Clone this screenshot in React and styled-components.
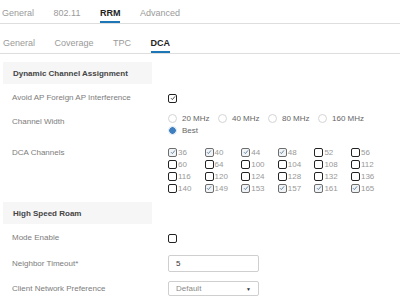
import React from 'react'
import styled, { createGlobalStyle } from 'styled-components'

const GlobalStyle = createGlobalStyle`
  body {
    margin: 0;
    background: #ffffff;
    font-family: "Liberation Sans", Arial, sans-serif;
  }
`

const channels = [
  [36, true], [40, true], [44, true], [48, true], [52, false], [56, false],
  [60, false], [64, false], [100, false], [104, false], [108, false], [112, false],
  [116, false], [120, false], [124, false], [128, false], [132, false], [136, false],
  [140, false], [149, true], [153, true], [157, true], [161, true], [165, true],
]

const widths = ['20 MHz', '40 MHz', '80 MHz', '160 MHz']

function Check({ checked, soft }) {
  return (
    <Box checked={checked} soft={soft}>
      {checked && (
        <svg width="6" height="6" viewBox="0 0 6 6">
          <path d="M1 3.2 L2.4 4.6 L5 1.4" fill="none" stroke={soft ? '#5b7c9a' : '#333'} strokeWidth="0.9" />
        </svg>
      )}
    </Box>
  )
}

export default function App() {
  return (
    <Page>
      <GlobalStyle />
      <TabBar top>
        <Tab>General</Tab>
        <Tab>802.11</Tab>
        <Tab active>RRM</Tab>
        <Tab>Advanced</Tab>
      </TabBar>
      <TabBar>
        <Tab>General</Tab>
        <Tab>Coverage</Tab>
        <Tab>TPC</Tab>
        <Tab active>DCA</Tab>
      </TabBar>

      <SectionHead>Dynamic Channel Assignment</SectionHead>

      <Row top={8}>
        <Label>Avoid AP Foreign AP Interference</Label>
        <Control><Check checked /></Control>
      </Row>

      <Row top={8}>
        <Label pad={4}>Channel Width</Label>
        <RadioGrid>
          {widths.map((w) => (
            <Option key={w}><Radio />{w}</Option>
          ))}
          <Option><Radio selected />Best</Option>
        </RadioGrid>
      </Row>

      <Row top={10}>
        <Label pad={1}>DCA Channels</Label>
        <ChannelGrid>
          {channels.map(([n, on]) => (
            <Channel key={n}><Check checked={on} soft />{n}</Channel>
          ))}
        </ChannelGrid>
      </Row>

      <SectionHead top={8}>High Speed Roam</SectionHead>

      <Row top={8}>
        <Label>Mode Enable</Label>
        <Control><Check /></Control>
      </Row>

      <Row top={11} center>
        <Label>Neighbor Timeout*</Label>
        <Input>5</Input>
      </Row>

      <Row top={9} center>
        <Label>Client Network Preference</Label>
        <Select>
          <span>Default</span>
          <Caret>▼</Caret>
        </Select>
      </Row>
    </Page>
  )
}

const Page = styled.div`
  width: 400px;
  height: 299px;
  overflow: hidden;
  background: #fff;
`

const TabBar = styled.div`
  display: flex;
  gap: 19.5px;
  height: ${(p) => (p.top ? '23px' : '29px')};
  padding-left: ${(p) => (p.top ? '2px' : '3px')};
  border-bottom: 1px solid #dedede;
  align-items: flex-end;
`

const Tab = styled.div`
  font-size: 9px;
  line-height: 11px;
  color: ${(p) => (p.active ? '#222' : '#9a9a9a')};
  font-weight: ${(p) => (p.active ? 600 : 400)};
  padding-bottom: 2px;
  border-bottom: 2px solid ${(p) => (p.active ? '#1d76b5' : 'transparent')};
`

const SectionHead = styled.div`
  margin: ${(p) => p.top || 8}px 0 0 3px;
  width: 139px;
  height: 22px;
  padding-left: 10px;
  background: #f6f6f6;
  display: flex;
  align-items: center;
  font-size: 8px;
  font-weight: 700;
  color: #444;
`

const Row = styled.div`
  display: flex;
  align-items: ${(p) => (p.center ? 'center' : 'flex-start')};
  margin-top: ${(p) => p.top}px;
  padding-left: 12px;
`

const Label = styled.div`
  width: 156px;
  flex: none;
  font-size: 8px;
  line-height: 12px;
  padding-top: ${(p) => p.pad || 0}px;
  color: #7c7c7c;
`

const Control = styled.div`
  height: 12px;
  display: flex;
  align-items: center;
`

const Box = styled.span`
  box-sizing: border-box;
  width: 9px;
  height: 9px;
  flex: none;
  border-radius: 2px;
  border: ${(p) => (p.soft && p.checked ? '1.2px solid #6d6d6d' : '1.5px solid #222')};
  background: ${(p) => (p.soft && p.checked ? '#f1f4f7' : '#fff')};
  display: inline-flex;
  align-items: center;
  justify-content: center;
`

const RadioGrid = styled.div`
  display: grid;
  grid-template-columns: repeat(4, 50px);
  grid-auto-rows: 12px;
`

const Option = styled.label`
  display: flex;
  align-items: center;
  gap: 5px;
  font-size: 8px;
  color: #666;
  white-space: nowrap;
`

const Radio = styled.span`
  box-sizing: border-box;
  width: 9px;
  height: 9px;
  border-radius: 50%;
  flex: none;
  border: 1px solid ${(p) => (p.selected ? '#d7e4f0' : '#d4d4d4')};
  background: ${(p) => (p.selected ? 'radial-gradient(circle, #3f7fc0 0 3.2px, #eaf1f8 3.6px)' : '#fff')};
`

const ChannelGrid = styled.div`
  display: grid;
  grid-template-columns: repeat(6, 36.6px);
  grid-auto-rows: 12px;
`

const Channel = styled.label`
  display: flex;
  align-items: center;
  gap: 1px;
  font-size: 8px;
  color: #999;
`

const Input = styled.div`
  box-sizing: border-box;
  width: 91px;
  height: 17px;
  border: 1px solid #cfcfcf;
  border-radius: 2px;
  padding-left: 7px;
  display: flex;
  align-items: center;
  font-size: 8px;
  color: #333;
`

const Select = styled.div`
  box-sizing: border-box;
  width: 91px;
  height: 15px;
  border: 1px solid #cfcfcf;
  border-radius: 2px;
  padding: 0 7px;
  display: flex;
  align-items: center;
  justify-content: space-between;
  font-size: 8px;
  color: #8a8a8a;
`

const Caret = styled.span`
  font-size: 5px;
  color: #333;
`
